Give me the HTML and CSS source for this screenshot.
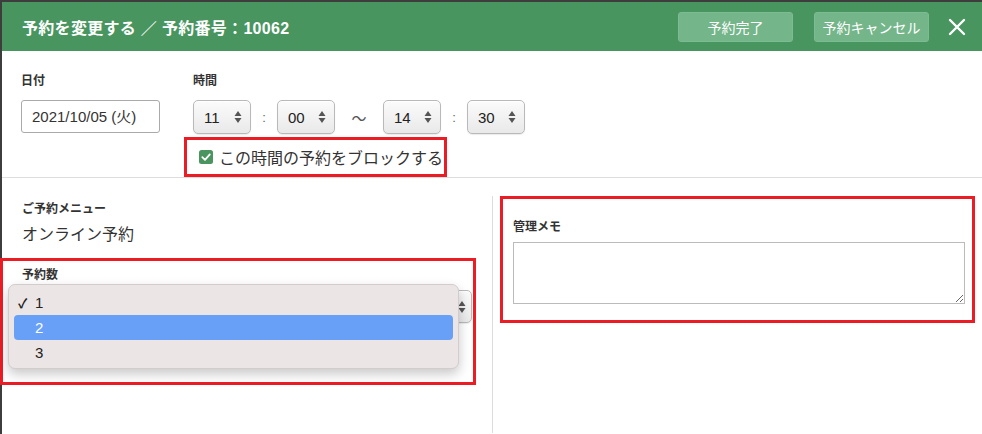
FILE: index.html
```html
<!DOCTYPE html>
<html lang="ja">

<head>
	<meta charset="utf-8">
	<meta name="viewport" content="width=device-width">
	<link rel="stylesheet" href="styles.css">
</head>

<body>
	<svg xmlns="http://www.w3.org/2000/svg" style="display:none;">
		<symbol id="icon-updown" viewBox="0 0 8 14">
			<path d="M4 1L7.5 6H0.5Z M4 13L7.5 8H0.5Z" fill="#555" />
		</symbol>
	</svg>

	<div class="modal">
		<div class="modal-header">
			<h1 class="modal-title">予約を変更する ／ 予約番号：10062</h1>
			<button class="hd-btn">予約完了</button>
			<button class="hd-btn">予約キャンセル</button>
			<svg class="close-btn" viewBox="0 0 18 18">
				<path d="M2 2L16 16M16 2L2 16" stroke="#fff" stroke-width="2.4" stroke-linecap="round" />
			</svg>
		</div>

		<div class="time-section">
			<div class="field">
				<span class="lbl">日付</span>
				<div class="date-input">2021/10/05 (火)</div>
			</div>
			<div class="field">
				<span class="lbl">時間</span>
				<div class="time-row">
					<div class="spin"><span>11</span><svg class="updown"><use href="#icon-updown" /></svg></div>
					<span class="sep">:</span>
					<div class="spin"><span>00</span><svg class="updown"><use href="#icon-updown" /></svg></div>
					<span class="tilde">～</span>
					<div class="spin"><span>14</span><svg class="updown"><use href="#icon-updown" /></svg></div>
					<span class="sep">:</span>
					<div class="spin"><span>30</span><svg class="updown"><use href="#icon-updown" /></svg></div>
				</div>
				<div class="mark block-mark">
					<label class="check-label">
						<svg class="check-box" viewBox="0 0 14 14">
							<rect width="14" height="14" rx="2.5" fill="#4a9460" />
							<path d="M3.3 7.2L6 9.8L10.8 4.4" stroke="#fff" stroke-width="1.8" fill="none" stroke-linecap="round" stroke-linejoin="round" />
						</svg>
						この時間の予約をブロックする
					</label>
				</div>
			</div>
		</div>

		<div class="lower">
			<div class="col-left">
				<span class="lbl">ご予約メニュー</span>
				<div class="menu-name">オンライン予約</div>

				<div class="mark count-mark">
					<span class="lbl">予約数</span>
					<!-- select sits under the open list, its value is covered -->
					<div class="spin count-select"><span></span><svg class="updown"><use href="#icon-updown" /></svg></div>
					<ul class="popup">
						<li><span class="tick">✓</span>1</li>
						<li class="active"><span class="tick"></span>2</li>
						<li><span class="tick"></span>3</li>
					</ul>
				</div>
			</div>

			<div class="col-right">
				<div class="mark memo-mark">
					<span class="lbl">管理メモ</span>
					<textarea class="memo"></textarea>
				</div>
			</div>
		</div>
	</div>
</body>

</html>
```

FILE: styles.css
```css
body {
	margin: 0;
	background-color: #3d3d3d;
	font-family: "Liberation Sans", "Noto Sans CJK JP", sans-serif;
	color: #333;
	overflow: hidden;
}

.modal {
	margin: 2px 0 0 2px;
	height: 432px;
	background-color: #fff;
}

.modal-header {
	display: flex;
	align-items: center;
	height: 49px;
	padding: 0 16px 0 20px;
	background-color: #489560;
}

.modal-title {
	flex: 1;
	margin: 0;
	font-size: 16px;
	font-weight: bold;
	color: #fff;
	letter-spacing: 0.3px;
}

.hd-btn {
	width: 115px;
	height: 30px;
	margin-right: 21px;
	padding: 0;
	border: 1px solid #7dbb93;
	border-radius: 3px;
	background-color: #74b58a;
	color: #fff;
	font-family: inherit;
	font-size: 14px;
}

.hd-btn:last-of-type {
	margin-right: 19px;
}

.close-btn {
	width: 18px;
	height: 18px;
}

/* date / time */

.time-section {
	display: flex;
	gap: 33px;
	padding: 22px 19px 0;
	border-bottom: 1px solid #dedede;
	height: 104px;
}

.field {
	display: flex;
	flex-direction: column;
	align-items: flex-start;
}

.lbl {
	display: block;
	font-size: 12px;
	font-weight: bold;
	line-height: 16px;
	color: #333;
}

.date-input {
	box-sizing: border-box;
	width: 139px;
	height: 33px;
	margin-top: 11px;
	padding-left: 10px;
	border: 1px solid #aaa;
	border-radius: 3px;
	font-size: 15px;
	line-height: 31px;
}

.time-row {
	display: flex;
	align-items: center;
	margin-top: 11px;
}

.spin {
	box-sizing: border-box;
	display: flex;
	align-items: center;
	justify-content: space-between;
	width: 58px;
	height: 34px;
	padding: 0 8px 0 10px;
	border: 1px solid #b9b9b9;
	border-radius: 5px;
	background: linear-gradient(#fbfbfb, #e9e9e9);
	box-shadow: inset 0 1px 0 #fff, 0 1px 1px rgba(0, 0, 0, 0.08);
	font-size: 15px;
	color: #222;
}

.updown {
	width: 8px;
	height: 14px;
}

.sep {
	width: 26px;
	text-align: center;
	font-size: 13px;
	color: #666;
}

.tilde {
	width: 48px;
	text-align: center;
	font-size: 15px;
	color: #555;
}

.mark {
	box-sizing: border-box;
	border: 3px solid #ec1c24;
}

.block-mark {
	width: 263px;
	height: 40px;
	margin: 3px 0 0 -9px;
	padding-left: 12px;
	display: flex;
	align-items: center;
}

.check-label {
	display: flex;
	align-items: center;
	gap: 6px;
	font-size: 16px;
	color: #333;
}

.check-box {
	width: 14px;
	height: 14px;
}

/* lower area */

.lower {
	display: flex;
}

.col-left {
	width: 490px;
	padding: 23px 0 0 20px;
	box-sizing: border-box;
}

.menu-name {
	margin-top: 7px;
	font-size: 16px;
	line-height: 22px;
}

.count-mark {
	position: relative;
	width: 476px;
	height: 127px;
	margin: 12px 0 0 -22px;
	padding: 6px 0 0 19px;
}

.count-select {
	width: 450px;
	height: 33px;
	margin-top: 7px;
	padding-right: 5px;
}

.popup {
	position: absolute;
	top: 23px;
	left: 5px;
	width: 451px;
	height: 85px;
	box-sizing: border-box;
	margin: 0;
	padding: 5px 5px;
	list-style: none;
	background-color: #ece5e5;
	border: 1px solid #d2cccc;
	border-radius: 7px;
	box-shadow: 0 5px 12px rgba(0, 0, 0, 0.22);
}

.popup li {
	display: flex;
	align-items: center;
	height: 25px;
	padding-left: 4px;
	border-radius: 4px;
	font-size: 15px;
	color: #222;
}

.popup li.active {
	background-color: #69a0f7;
	color: #fff;
}

.tick {
	width: 17px;
	font-size: 13px;
	font-weight: bold;
}

.col-right {
	flex: 1;
	margin-top: 18px;
	border-left: 1px solid #dcdcdc;
	height: 237px;
}

.memo-mark {
	width: 475px;
	height: 127px;
	margin-left: 7px;
	padding: 20px 0 0 10px;
}

.memo-mark .lbl {
	margin-bottom: 7px;
}

.memo {
	display: block;
	box-sizing: border-box;
	width: 452px;
	height: 62px;
	margin: 0;
	border: 1px solid #bbb;
	border-radius: 0;
	resize: both;
}
```
